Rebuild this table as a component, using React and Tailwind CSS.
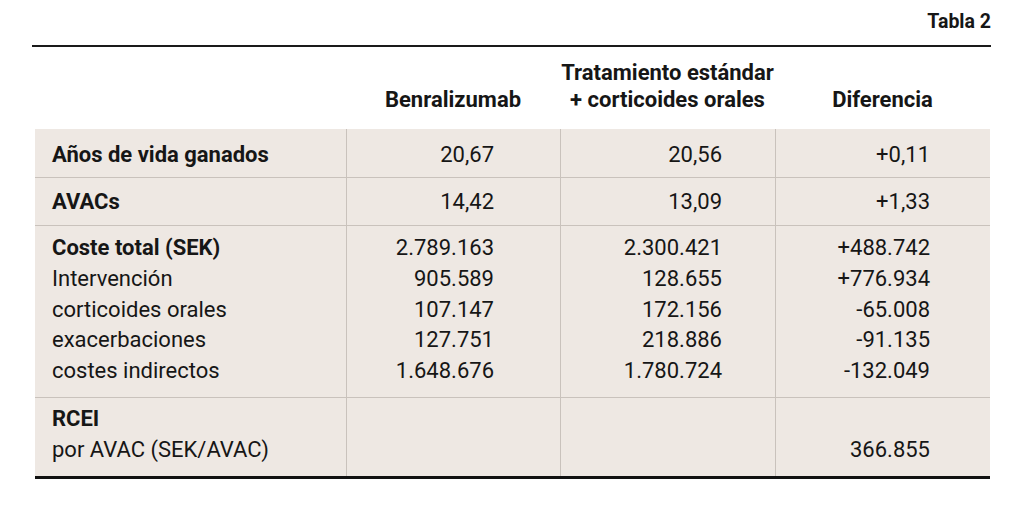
const rows = [
  { label: "Años de vida ganados", bold: true, values: ["20,67", "20,56", "+0,11"] },
  { label: "AVACs", bold: true, values: ["14,42", "13,09", "+1,33"] },
];

const costRows = [
  { label: "Coste total (SEK)", bold: true, values: ["2.789.163", "2.300.421", "+488.742"] },
  { label: "Intervención", values: ["905.589", "128.655", "+776.934"] },
  { label: "corticoides orales", values: ["107.147", "172.156", "-65.008"] },
  { label: "exacerbaciones", values: ["127.751", "218.886", "-91.135"] },
  { label: "costes indirectos", values: ["1.648.676", "1.780.724", "-132.049"] },
];

const colPad = ["pr-[66px]", "pr-[53px]", "pr-[60px]"];

export default function App() {
  return (
    <div className="w-[1024px] h-[521px] bg-white text-[#161616] font-['Roboto',sans-serif] pl-[32px] pr-[33px]">
      <div className="h-[45px] flex items-end justify-end pb-[14px]">
        <span className="text-[19.5px] font-bold leading-none">Tabla 2</span>
      </div>
      <div className="h-[2px] bg-[#1a1a1a]" />

      <div className="ml-[3px] mr-[1px]">
        {/* header */}
        <div className="grid grid-cols-[311px_214px_215px_215px] h-[82px] items-end text-[22px] font-bold leading-[27px] pb-[16px]">
          <div />
          <div className="text-center">Benralizumab</div>
          <div className="text-center">
            Tratamiento estándar
            <br />+ corticoides orales
          </div>
          <div className="text-center">Diferencia</div>
        </div>

        <div className="bg-[#eee8e3] text-[22px] leading-[31px]">
          <div className="grid grid-cols-[311px_214px_215px_215px] border-b border-[#c9c2bc]">
            <div className="pl-[17px] pt-[10px] pb-[7px] font-bold">{rows[0].label}</div>
            {rows[0].values.map((v, i) => (
              <div key={i} className={`border-l border-[#c9c2bc] text-right pt-[10px] pb-[7px] ${colPad[i]}`}>{v}</div>
            ))}
          </div>
          <div className="grid grid-cols-[311px_214px_215px_215px] border-b border-[#c9c2bc]">
            <div className="pl-[17px] py-2 font-bold">{rows[1].label}</div>
            {rows[1].values.map((v, i) => (
              <div key={i} className={`border-l border-[#c9c2bc] text-right py-2 ${colPad[i]}`}>{v}</div>
            ))}
          </div>
          <div className="grid grid-cols-[311px_214px_215px_215px] border-b border-[#c9c2bc] leading-[30.8px]">
            <div className="pl-[17px] pt-[7px] pb-[10px]">
              {costRows.map((r) => (
                <div key={r.label} className={r.bold ? "font-bold" : ""}>{r.label}</div>
              ))}
            </div>
            {[0, 1, 2].map((i) => (
              <div key={i} className={`border-l border-[#c9c2bc] text-right pt-[7px] pb-[10px] ${colPad[i]}`}>
                {costRows.map((r) => (
                  <div key={r.label}>{r.values[i]}</div>
                ))}
              </div>
            ))}
          </div>
          <div className="grid grid-cols-[311px_214px_215px_215px] border-b-[3px] border-[#111]">
            <div className="pl-[17px] pt-[5px] pb-[11px]">
              <div className="font-bold">RCEI</div>
              <div>por AVAC (SEK/AVAC)</div>
            </div>
            <div className="border-l border-[#c9c2bc]" />
            <div className="border-l border-[#c9c2bc]" />
            <div className={`border-l border-[#c9c2bc] text-right pt-[5px] pb-[11px] ${colPad[2]}`}>
              <div>&nbsp;</div>
              <div>366.855</div>
            </div>
          </div>
        </div>
      </div>
    </div>
  );
}
